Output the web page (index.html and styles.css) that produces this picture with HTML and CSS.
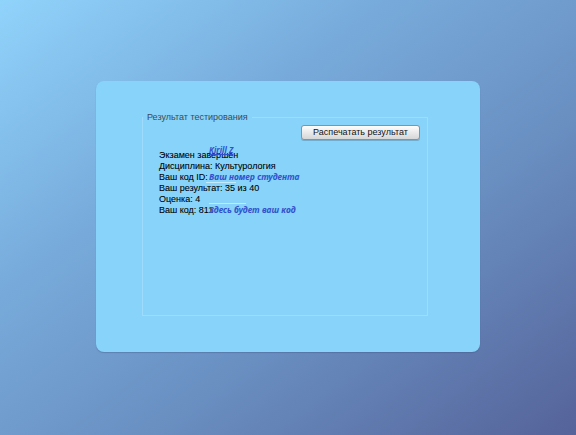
FILE: index.html
```html
<!DOCTYPE html>
<html lang="ru">
<head>
<meta charset="utf-8">
<title>Результат тестирования</title>
<link rel="stylesheet" href="styles.css">
</head>
<body>
<div class="panel">
  <fieldset class="result-box">
    <legend class="result-legend">Результат тестирования</legend>
    <div class="actions">
      <button class="print-btn" type="button">Распечатать результат</button>
    </div>
    <div class="results">
      <div class="line">Экзамен завершен<a class="note note-name">Kirill Z</a></div>
      <div class="line">Дисциплина: Культурология</div>
      <div class="line">Ваш код ID:<span class="field field-id"></span><span class="note">Ваш номер студента</span></div>
      <div class="line">Ваш результат: 35 из 40</div>
      <div class="line">Оценка: 4<span class="field field-grade"></span></div>
      <div class="line">Ваш код: 811<span class="note">Здесь будет ваш код</span></div>
    </div>
  </fieldset>
</div>
</body>
</html>
```
FILE: styles.css
```css
html, body {
  margin: 0;
  padding: 0;
}
body {
  width: 576px;
  height: 435px;
  box-sizing: border-box;
  padding-top: 81px;
  overflow: hidden;
  background: linear-gradient(to bottom right, #90d3fb 0%, #78acdc 32%, #6a90c2 62%, #55639a 100%);
  font-family: "Liberation Sans", Arial, sans-serif;
}
.panel {
  width: 384px;
  height: 271px;
  margin: 0 auto;
  box-sizing: border-box;
  padding: 31px 52px 0 46px;
  background: #87d3f9;
  border-radius: 8px;
  box-shadow: 0 1px 1px rgba(60, 80, 130, 0.35);
}
.result-box {
  margin: 0;
  padding: 0;
  height: 204px;
  border: 1px solid rgba(255, 255, 255, 0.2);
  box-sizing: border-box;
}
.result-legend {
  padding: 0 4px;
  margin-left: 0;
  font-size: 9px;
  line-height: 11px;
  color: #3c4a58;
}
.actions {
  display: flex;
  justify-content: flex-end;
  padding-right: 7px;
  margin-top: 2px;
}
.print-btn {
  width: 119px;
  height: 15px;
  padding: 0;
  margin: 0;
  font-family: "Liberation Sans", Arial, sans-serif;
  font-size: 9px;
  line-height: 13px;
  color: #111;
  background: linear-gradient(#fefefe, #e6e6e6 60%, #d6d6d6);
  border: 1px solid #8c9098;
  border-radius: 3px;
  box-shadow: 0 1px 0 rgba(40, 60, 90, 0.25);
}
.results {
  margin-top: 10px;
  padding-left: 16px;
  font-size: 9px;
  line-height: 11px;
  color: #000;
  -webkit-text-stroke: 0.08px #000;
}
.line {
  position: relative;
  height: 11px;
  white-space: nowrap;
}
.note {
  position: absolute;
  left: 50px;
  top: -1px;
  font-family: "Noto Sans", "Liberation Sans", sans-serif;
  font-style: italic;
  font-weight: bold;
  font-size: 8.5px;
  line-height: 11px;
  color: #3252cc;
  -webkit-text-stroke: 0;
}
.note-name {
  top: -6px;
  font-size: 8px;
  text-decoration: underline;
}
.field {
  position: absolute;
  height: 1px;
  background: rgba(255, 255, 255, 0.5);
}
.field-id {
  left: 47px;
  width: 30px;
  top: 10px;
}
.field-grade {
  left: 50px;
  width: 37px;
  top: 9px;
}
```
